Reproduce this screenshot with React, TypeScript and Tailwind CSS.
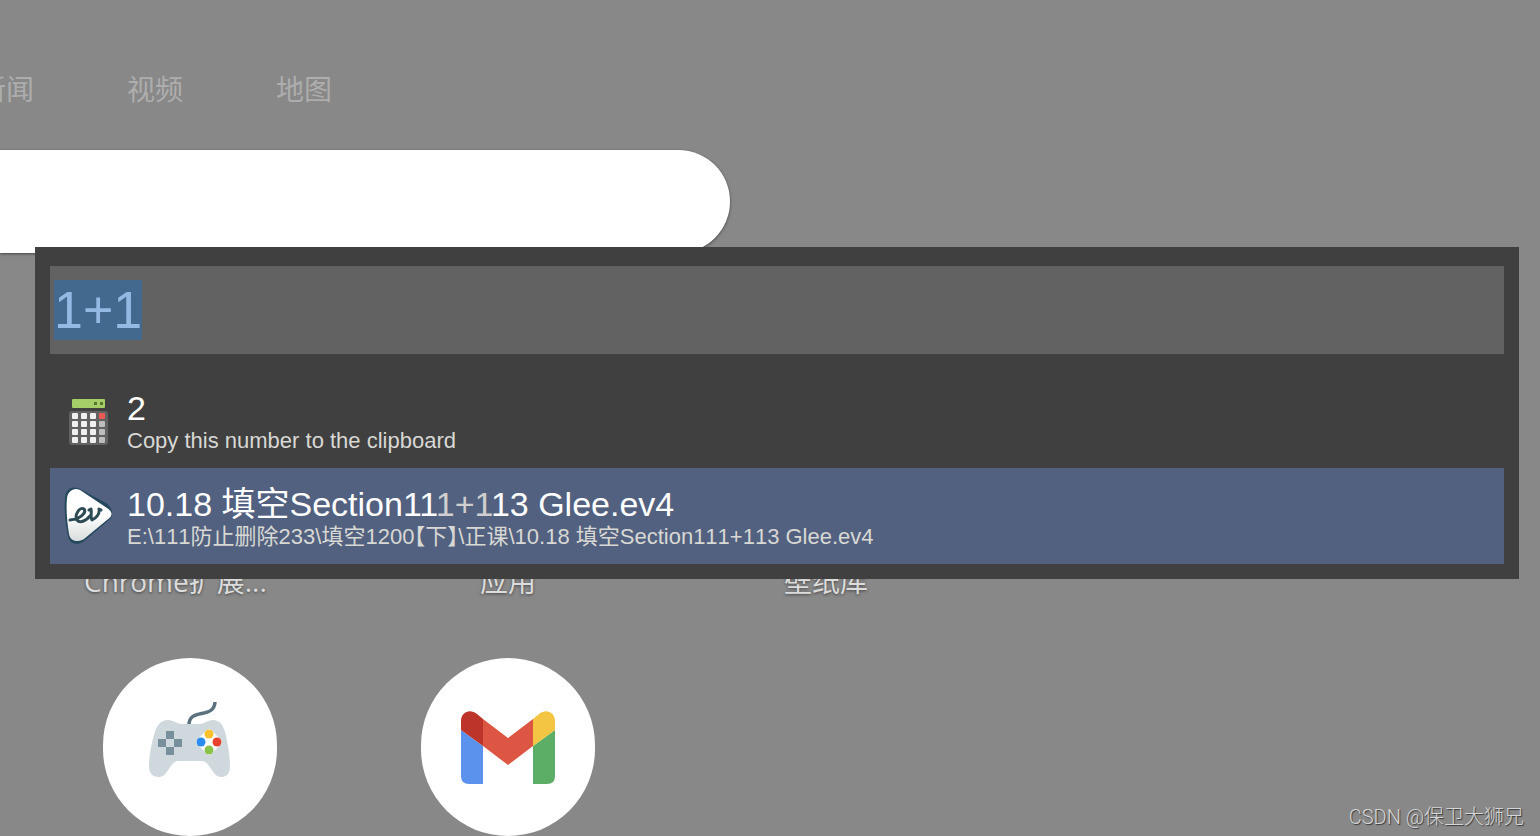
import { useEffect, useRef, useState } from 'react';
import type { ReactNode } from 'react';

interface Shortcut {
  id: number;
  label: string;
  next?: string;
  icon?: ReactNode;
}

const GamepadIcon = () => (
  <svg viewBox="0 0 84 94" className="w-[84px] h-[94px]" aria-hidden="true">
    <path d="M41 25 C41 7 66 20 67 2" fill="none" stroke="#5b717d" strokeWidth="3.5" />
    <path
      d="M20 20 C26 20 28 24 34 24 L51 24 C57 24 59 20 65 20 C72 20 75 25 77 32 C80 44 82 57 82 66 C82 73 79 77 73 77 C64 77 62 61 54 61 L30 61 C22 61 20 77 11 77 C4 77 1 73 1 66 C1 57 3 44 7 32 C9 25 13 20 20 20 Z"
      fill="#cfd8dc"
    />
    <path d="M18 31h8v8h-8zM10 39h8v8h-8zM26 39h8v8h-8zM18 47h8v8h-8z" fill="#78909c" />
    <rect x="51" y="32" width="20" height="20" rx="3" transform="rotate(45 61 42)" fill="#fff" />
    <circle cx="61" cy="34" r="4.5" fill="#fbc02d" />
    <circle cx="53" cy="42" r="4.5" fill="#2a8cf0" />
    <circle cx="69" cy="42" r="4.5" fill="#e8432f" />
    <circle cx="61" cy="50" r="4.5" fill="#8bc34a" />
  </svg>
);

const GmailIcon = () => (
  <svg viewBox="0 0 94 74" className="w-[94px] h-[74px]" aria-hidden="true">
    <path d="M0 20 L22 36 V74 H8 Q0 74 0 66 Z" fill="#5a92ee" />
    <path d="M94 20 L72 36 V74 H86 Q94 74 94 66 Z" fill="#5cae66" />
    <path d="M22 9 L47 28 L72 9 V36 L47 55 L22 36 Z" fill="#dd5644" />
    <path d="M0 20 V11 C0 2 9 -2 16 4 L22 9 V36 Z" fill="#bd352a" />
    <path d="M94 20 V11 C94 2 85 -2 78 4 L72 9 V36 Z" fill="#f4c543" />
  </svg>
);

const CalculatorIcon = () => (
  <svg viewBox="0 0 50 50" className="size-[50px] shrink-0" aria-hidden="true">
    <rect x="9" y="4" width="33" height="9" rx="1" fill="#a5cd68" />
    <path d="M31 7h3v3h-3zM37 7h3v3h-3z" fill="#55752d" />
    <rect x="6" y="16" width="39" height="34" rx="3" fill="#626262" />
    {[18, 26, 34, 42].map((y, row) =>
      [9, 18, 27, 36].map((x, col) => (
        <rect
          key={`${x}-${y}`}
          x={x}
          y={y}
          width="6"
          height="6"
          rx="1"
          fill={col < 3 ? '#f0f0f0' : row === 0 ? '#ea5a52' : '#bdbdbd'}
        />
      ))
    )}
  </svg>
);

const EvIcon = () => (
  <svg viewBox="0 0 50 60" className="w-[50px] h-[60px] shrink-0" aria-hidden="true">
    <defs>
      <linearGradient id="evFill" x1="0" y1="0" x2="0" y2="1">
        <stop offset="0.5" stopColor="#ffffff" />
        <stop offset="1" stopColor="#d9dddd" />
      </linearGradient>
    </defs>
    <path
      d="M2 11 C3 3 9 0 15 2 L43 17 C50 22 51 30 46 34 L20 56 C13 60 6 57 5 50 C2 36 1 22 2 11 Z"
      fill="#24485c"
    />
    <path
      d="M4 12 C5 5 11 1 17 4 L44 22 C50 26 50 30 44 34 L21 53 C14 57 7 55 6 48 C4 36 3 23 4 12 Z"
      fill="url(#evFill)"
    />
    <path
      d="M7 34 C17 33 24 27 21 23 C17 20 11 29 14 34 C17 38 24 34 27 30"
      fill="none"
      stroke="#2c4b55"
      strokeWidth="3"
      strokeLinecap="round"
    />
    <path
      d="M26 24 L28 23 C29 27 27 31 29 34 C33 32 37 28 36 23 L38 24"
      fill="none"
      stroke="#2c4b55"
      strokeWidth="3"
      strokeLinecap="round"
      strokeLinejoin="round"
    />
  </svg>
);

const navLinks = ['新闻', '视频', '地图'];

const shortcuts: Shortcut[] = [
  { id: 1, label: 'Chrome扩展...', next: '游戏', icon: <GamepadIcon /> },
  { id: 2, label: '应用', next: 'Gmail', icon: <GmailIcon /> },
  { id: 3, label: '壁纸库' },
];

const NewTabPage = () => (
  <div className="flex flex-col">
    <nav className="flex gap-[93px] -ml-[22px] pt-[71px] text-[28px] leading-[40px] text-[#adadad]">
      {navLinks.map((name) => (
        <a key={name} href="#" className="shrink-0">
          {name}
        </a>
      ))}
    </nav>
    <input
      type="search"
      aria-label="搜索"
      className="mt-[39px] h-[103px] w-[730px] rounded-r-full bg-white px-8 text-[28px] text-gray-800 shadow-[0_1px_3px_rgba(0,0,0,0.5)] outline-none"
    />
    <div className="mt-[308px] flex pl-[31px]">
      {shortcuts.map((item) => (
        <div key={item.id} className="flex w-[318px] shrink-0 flex-col items-center">
          <a
            href="#"
            className={`w-[212px] font-['Open_Sans','Noto_Sans_CJK_SC',sans-serif] text-[28px] leading-[40px] text-[#dcdcdc] [text-shadow:0_1px_3px_rgba(0,0,0,0.5)] ${
              item.id === 1 ? 'text-left' : 'text-center'
            }`}
          >
            {item.label}
          </a>
          {item.icon && (
            <button
              aria-label={item.next}
              className="mt-[57px] flex h-[178px] w-[174px] items-center justify-center rounded-full bg-white"
            >
              {item.icon}
            </button>
          )}
        </div>
      ))}
    </div>
  </div>
);

const Launcher = () => {
  const [query, setQuery] = useState('1+1');
  const inputRef = useRef<HTMLInputElement>(null);

  useEffect(() => {
    inputRef.current?.focus();
    inputRef.current?.select();
  }, []);

  return (
    <div className="absolute left-[35px] right-[21px] top-[247px] bg-[#404040] px-[15px] pb-[15px] pt-[19px]">
      <input
        ref={inputRef}
        type="text"
        aria-label="Query"
        value={query}
        onChange={(e) => setQuery(e.target.value)}
        className="block h-[88px] w-full bg-[#626262] px-1 text-[52px] leading-[60px] text-[#e3e0e3] outline-none selection:bg-[#44698ffd] selection:text-[#94b9e3]"
      />
      <div className="mt-[18px]">
        <button className="flex h-24 w-full items-center gap-[14px] px-[13px] text-left">
          <CalculatorIcon />
          <span className="flex flex-col pt-1">
            <span className="text-[34px] leading-[38px] text-white">2</span>
            <span className="text-[22px] leading-[28px] text-[#d8d8d4]">Copy this number to the clipboard</span>
          </span>
        </button>
        <button className="flex h-24 w-full items-center gap-[14px] bg-[#52617f] px-[13px] text-left">
          <EvIcon />
          <span className="flex flex-col pt-1">
            <span className="text-[34px] leading-[38px] text-white">
              10.18 填空Section11<span className="text-[#cfcfcf]">1+1</span>13 Glee.ev4
            </span>
            <span className="text-[22px] leading-[28px] text-[#d8d8d4] [font-feature-settings:'halt'] [font-kerning:none]">
              {'E:\\111防止删除233\\填空1200【下】\\正课\\10.18 填空Section111+113 Glee.ev4'}
            </span>
          </span>
        </button>
      </div>
    </div>
  );
};

const App = () => {
  return (
    <div className="relative h-screen overflow-hidden bg-[#888888] font-['Liberation_Sans','Noto_Sans_CJK_SC',sans-serif]">
      <NewTabPage />
      <Launcher />
      <div className="absolute bottom-1 right-4 font-['Roboto','Noto_Sans_CJK_SC',sans-serif] text-[20px] leading-[30px] font-light text-[#d6d6d6] [text-shadow:1px_1px_1px_rgba(0,0,0,0.6)]">
        CSDN @保卫大狮兄
      </div>
    </div>
  );
};

export default App;
